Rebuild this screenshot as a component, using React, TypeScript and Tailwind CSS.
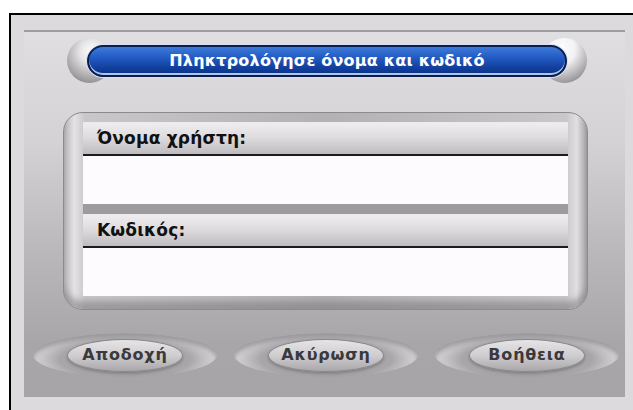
const labelFont = { fontFamily: '"DejaVu Sans", "Liberation Sans", sans-serif' };

function Field({ label, className }: { label: string; className?: string }) {
  return (
    <div className={className}>
      <div className="h-[34px] flex items-center pl-[14px] border-t border-white/70 border-b-2 border-b-[#1c1c1e] bg-[linear-gradient(180deg,#efedf0_0%,#dedcdf_45%,#bebcbf_100%)]">
        <span className="text-[17px] font-bold text-[#111] tracking-[0.2px]" style={labelFont}>
          {label}
        </span>
      </div>
      <div className="h-[48px] bg-[#fefbfe]" />
    </div>
  );
}

function OvalButton({ label }: { label: string }) {
  return (
    <div className="w-[184px] h-[44px] rounded-[50%] flex items-center justify-center bg-[radial-gradient(ellipse_at_50%_60%,#a8a6a9_0%,#a8a6a9_50%,#dcdadd_72%,#bcbabd_86%,#a9a7aa_100%)] shadow-[inset_0_4px_5px_rgba(90,88,92,0.5)]">
      <div className="w-[116px] h-[33px] rounded-[50%] flex items-center justify-center border border-[#8a888b] bg-[linear-gradient(180deg,#e6e4e7_0%,#cfcdd0_50%,#a9a7aa_100%)] shadow-[0_2px_3px_rgba(60,60,62,0.35)]">
        <span className="text-[16px] font-bold text-[#3a393c] tracking-[0.8px]" style={labelFont}>
          {label}
        </span>
      </div>
    </div>
  );
}

export default function App() {
  return (
    <div className="w-[633px] h-[410px] bg-white pt-[13px] pl-[9px] overflow-hidden">
      <div className="h-full flex border-t-2 border-l-2 border-black bg-[#dddadd] pt-[15px] pl-[13px] pr-[8px] pb-[13px]">
        <div className="flex-1 flex flex-col border-t-2 border-[#9e9c9f] bg-[linear-gradient(180deg,#e0dee1_0%,#d4d2d5_30%,#bab8bb_60%,#a8a6a9_85%,#a6a4a7_100%)]">
          {/* title bar with silver end caps */}
          <div className="mt-[6px] ml-[43px] w-[520px] h-[45px] flex items-center">
            <div className="w-[45px] h-[45px] shrink-0 rounded-full bg-[radial-gradient(circle_at_55%_30%,#ffffff_0%,#e4e3e6_30%,#a3a1a4_70%,#6e6c70_100%)]" />
            <div className="relative z-10 -mx-[25px] flex-1 h-[32px] rounded-full border-2 border-[#0b1d4f] ring-1 ring-[#d6e2f5] bg-[linear-gradient(180deg,#3d7ad9_0%,#2159c2_40%,#123f9c_75%,#0c3286_100%)] shadow-[inset_0_-2px_0_rgba(190,214,245,0.9)] flex items-center justify-center">
              <span className="text-white text-[16px] font-bold tracking-[0.2px]" style={labelFont}>
                Πληκτρολόγησε όνομα και κωδικό
              </span>
            </div>
            <div className="w-[45px] h-[45px] shrink-0 rounded-full bg-[radial-gradient(circle_at_40%_25%,#ffffff_0%,#f2f1f3_35%,#a6a4a7_72%,#6b696d_100%)]" />
          </div>

          {/* login form */}
          <div className="mt-[29px] ml-[39px] w-[525px] h-[198px] rounded-[20px] border border-[#8c8a8d] bg-[linear-gradient(90deg,#bdbbbe_0%,#e4e2e5_2%,#c9c7ca_4%,#b3b1b4_50%,#c9c7ca_96%,#e1dfe2_98%,#a9a7aa_100%)] px-[19px] pt-[9px] pb-[9px] shadow-[inset_0_-8px_6px_rgba(120,118,122,0.55)]">
            <div className="bg-[#9d9b9e]">
              <Field label="Όνομα χρήστη:" />
              <Field label="Κωδικός:" className="mt-[10px]" />
            </div>
          </div>

          {/* action buttons */}
          <div className="mt-[23px] pl-[9px] flex gap-[17px]">
            <OvalButton label="Αποδοχή" />
            <OvalButton label="Ακύρωση" />
            <OvalButton label="Βοήθεια" />
          </div>
        </div>
      </div>
    </div>
  );
}
